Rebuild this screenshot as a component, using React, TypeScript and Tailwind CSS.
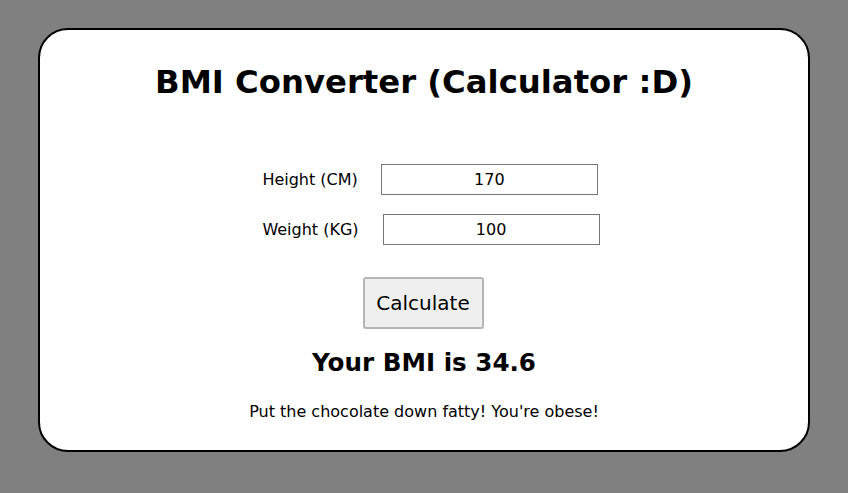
import {useState} from "react";

const App = () => {
    const [height, setHeight] = useState<string>("170");
    const [weight, setWeight] = useState<string>("100");

    const bmi = (Number(weight) / Math.pow(Number(height) / 100, 2)).toFixed(1);

    return (
        <div className="min-h-[493px] bg-[#808080] px-[38px] pt-[28px] font-['DejaVu_Sans',Verdana,sans-serif] text-black">
            <div className="h-[424px] rounded-[30px] border-2 border-black bg-white flex flex-col items-center">
                <h1 className="mt-[28px] text-[32.3px] font-bold leading-[48px]">BMI Converter (Calculator :D)</h1>

                <div className="mt-[58px] flex flex-col gap-[19px] pl-[14px]">
                    <div className="flex items-center">
                        <label className="text-[16px] mr-[23px]">Height (CM)</label>
                        <input
                            value={height}
                            onChange={e => setHeight(e.target.value)}
                            className="w-[217px] h-[31px] border border-[#767676] text-center text-[16px] outline-none"
                        />
                    </div>
                    <div className="flex items-center">
                        <label className="text-[16px] mr-[24px]">Weight (KG)</label>
                        <input
                            value={weight}
                            onChange={e => setWeight(e.target.value)}
                            className="w-[217px] h-[31px] border border-[#767676] text-center text-[16px] outline-none"
                        />
                    </div>
                </div>

                <button className="mt-[32px] -ml-[2px] w-[121px] h-[52px] rounded-[3px] border-2 border-[#b5b5b5] bg-[#efefef] text-[20px]">
                    Calculate
                </button>

                <h2 className="mt-[18px] text-[24.6px] font-bold leading-[32px]">Your BMI is {bmi}</h2>

                <p className="mt-[21px] text-[16px]">Put the chocolate down fatty! You're obese!</p>
            </div>
        </div>
    )
}

export default App;
